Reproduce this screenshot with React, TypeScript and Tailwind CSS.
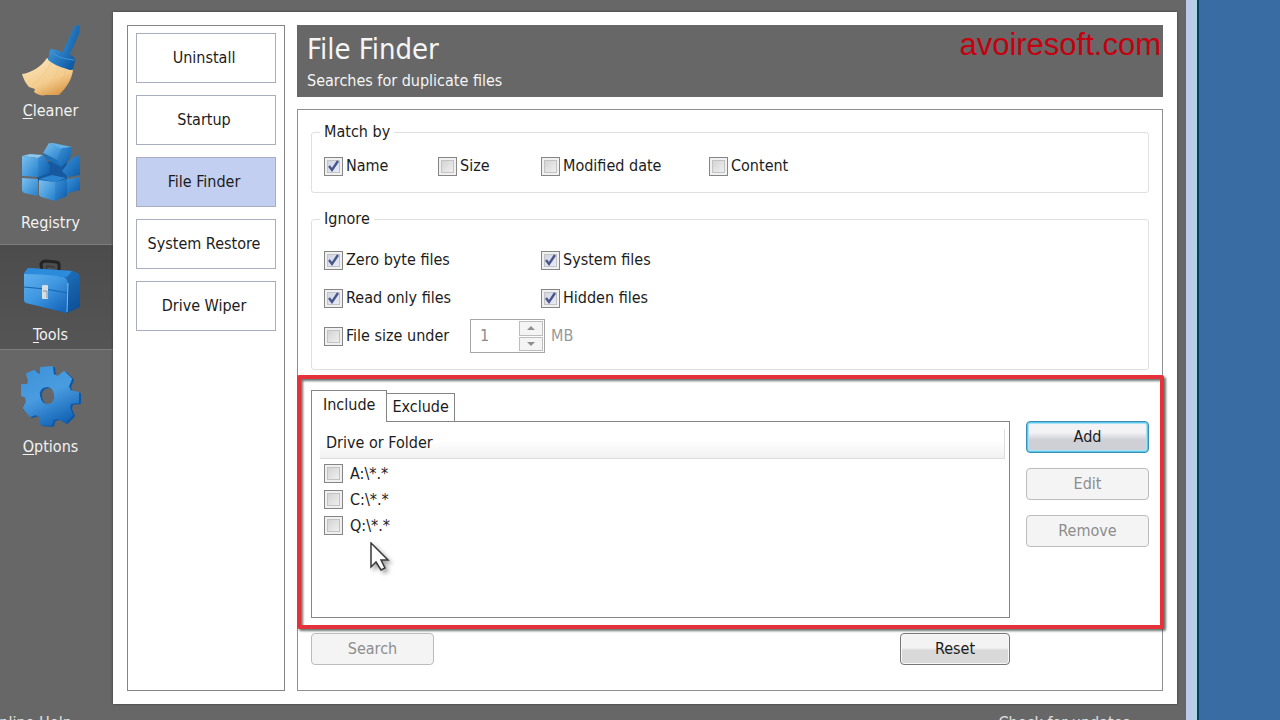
import { useState } from "react";
import clsx from "clsx";

// 좌측 메뉴 아이콘
function BroomIcon() {
  return (
    <svg viewBox="0 0 60 72" className="h-[72px] w-[60px]" aria-hidden="true">
      <defs>
        <linearGradient id="broom-handle" x1="0" y1="0" x2="1" y2="0.6">
          <stop offset="0" stopColor="#3f95d8" />
          <stop offset="1" stopColor="#0f5ca6" />
        </linearGradient>
        <linearGradient id="broom-hair" x1="0.2" y1="0" x2="0.8" y2="1">
          <stop offset="0" stopColor="#fbe6bb" />
          <stop offset="0.6" stopColor="#f3cb8d" />
          <stop offset="1" stopColor="#d9923f" />
        </linearGradient>
      </defs>
      <path
        d="M26 33 C20 42 10 48 1 49 C3 55 5 59 8 62 L14 64 L13 67 C17 70 21 71 25 70 L38 70 C46 62 51 54 52 45 C44 43 34 39 26 33Z"
        fill="url(#broom-hair)"
      />
      <path d="M30 37 C26 47 19 55 11 60 M38 41 C35 52 29 61 22 68 M45 44 C43 54 38 62 32 69" stroke="#e3b26c" strokeWidth="1" fill="none" opacity="0.3" />
      <path d="M53 2 Q58 -2 59 2 L58 9 L48 31 L41 28Z" fill="url(#broom-handle)" />
      <path d="M29 25 Q31 23 35 25 L50 30 Q54 32 54 36 L52 44 Q50 46 46 44 C38 42 32 39 27 35Z" fill="url(#broom-handle)" />
      <path d="M29 26 C37 33 45 34 53 35" stroke="#3f95d8" strokeWidth="1" fill="none" />
    </svg>
  );
}

function CubesIcon() {
  return (
    <svg viewBox="0 0 60 72" className="h-[72px] w-[60px]" aria-hidden="true">
      <defs>
        <linearGradient id="cube-light" x1="0" y1="0" x2="1" y2="1">
          <stop offset="0" stopColor="#7dc0ef" />
          <stop offset="1" stopColor="#2381cd" />
        </linearGradient>
        <linearGradient id="cube-dark" x1="0" y1="0" x2="1" y2="1">
          <stop offset="0" stopColor="#3b93d8" />
          <stop offset="1" stopColor="#0d5cab" />
        </linearGradient>
      </defs>
      <path d="M16 25 L46 24 L46 45 L16 45Z" fill="#17599f" />
      {/* 왼쪽 */}
      <path d="M1 19 L9 17 L22 18 L17 21Z" fill="#8bc8f0" />
      <path d="M1 19 L17 21 L17 40 L1 39Z" fill="url(#cube-light)" />
      <path d="M17 21 L22 18 L29 29 L28 36 L17 40Z" fill="url(#cube-dark)" />
      {/* 오른쪽 */}
      <path d="M51 21 L59 18 L59 38 L47 40 L41 34Z" fill="url(#cube-dark)" />
      <path d="M46 42 L59 40 L59 53 L47 56Z" fill="url(#cube-dark)" />
      {/* 아래 */}
      <path d="M1 41 L17 42 L17 59 L3 56 Q1 55 1 53Z" fill="url(#cube-light)" />
      <path d="M18 42 L31 38 L45 41 L34 45Z" fill="#2b84cf" />
      <path d="M18 43 L34 45 L34 64 L20 60 Q18 59 18 57Z" fill="url(#cube-light)" />
      <path d="M34 45 L46 42 L46 59 L34 64Z" fill="url(#cube-dark)" />
      {/* 위 */}
      <path d="M22 16 L28 6 L41 11 L36 23Z" fill="url(#cube-light)" />
      <path d="M28 6 L32 6 L51 10 L41 12Z" fill="#62b1e9" />
      <path d="M41 11 L51 10 L49 22 L40 30 L36 23Z" fill="url(#cube-dark)" />
      <path d="M22 16 L36 23 L40 30 L25 22Z" fill="#1d70ba" />
    </svg>
  );
}

function ToolboxIcon() {
  return (
    <svg viewBox="0 0 60 72" className="h-[72px] w-[60px]" aria-hidden="true">
      <defs>
        <linearGradient id="box-front" x1="0" y1="0" x2="0.8" y2="1">
          <stop offset="0" stopColor="#5fb0ec" />
          <stop offset="0.5" stopColor="#3f97e0" />
          <stop offset="1" stopColor="#1667bb" />
        </linearGradient>
        <linearGradient id="box-side" x1="0" y1="0" x2="1" y2="1">
          <stop offset="0" stopColor="#2f86d3" />
          <stop offset="1" stopColor="#0a4d94" />
        </linearGradient>
      </defs>
      <path d="M21 23 L20 15 Q21 12 25 12 L35 13 Q38 13 38 16 L38 22" stroke="#242424" strokeWidth="3" fill="none" />
      <path d="M25 22 L26 17 L34 18" stroke="#3a3a3a" strokeWidth="1.5" fill="none" />
      <path d="M3 24 L7 19 L51 22 Q57 23 59 27 L59 58 L46 64 L5 54 Q3 53 3 51Z" fill="url(#box-side)" />
      <path d="M4 23 L7 19 L51 22 L46 28 L4 25Z" fill="#2d8bdb" />
      <path d="M3 25 Q24 25 43 28 Q47 30 47 36 L46 64 L5 54 Q3 53 3 51Z" fill="url(#box-front)" />
      <path d="M3 38 L24 40 L47 44" stroke="#1763ad" strokeWidth="1" fill="none" />
      <path d="M47 34 L46 63" stroke="#74bdf1" strokeWidth="1" fill="none" />
      <rect x="21" y="36" width="6" height="14" rx="1" fill="#d6dee4" />
      <path d="M22 42 L26 42 L26 49" stroke="#83939f" strokeWidth="1" fill="none" />
    </svg>
  );
}

function GearIcon() {
  return (
    <svg viewBox="0 0 60 72" className="h-[72px] w-[60px]" aria-hidden="true">
      <defs>
        <linearGradient id="gear-face" gradientUnits="userSpaceOnUse" x1="15" y1="6" x2="42" y2="64">
          <stop offset="0" stopColor="#3f93d8" />
          <stop offset="0.45" stopColor="#4a9ce0" />
          <stop offset="1" stopColor="#1061b3" />
        </linearGradient>
        <path
          id="gear-shape"
          fillRule="evenodd"
          d="M20 7 L31 6 L32 14 L37 16 L43 11 L50 18 L47 25 L49 30 L57 32 L57 41 L49 42 L48 47 L51 54 L44 61 L37 57 L32 58 L30 64 L20 63 L19 55 L15 53 L9 55 L3 47 L6 41 L5 36 L1 34 L1 24 L7 24 L8 20 L6 13 L13 10 L18 14 L20 13Z M26 25 C20 25 17 30 18 35 C19 41 23 45 28 44 C33 43 35 38 34 33 C33 28 30 25 26 25Z"
        />
      </defs>
      <use href="#gear-shape" x="2" y="1" fill="#0f58a6" stroke="#0f58a6" strokeWidth="2" strokeLinejoin="round" />
      <use href="#gear-shape" fill="url(#gear-face)" stroke="url(#gear-face)" strokeWidth="2" strokeLinejoin="round" />
    </svg>
  );
}

const NAV_ITEMS = [
  { key: "C", before: "", after: "leaner", Icon: BroomIcon },
  { key: "g", before: "Re", after: "istry", Icon: CubesIcon },
  { key: "T", before: "", after: "ools", Icon: ToolboxIcon },
  { key: "O", before: "", after: "ptions", Icon: GearIcon },
];

const TOOLS = ["Uninstall", "Startup", "File Finder", "System Restore", "Drive Wiper"];

const FOLDERS = ["A:\\*.*", "C:\\*.*", "Q:\\*.*"];

// 체크박스
function CheckMark({ id, checked }: { id: string; checked?: boolean }) {
  return (
    <span className="grid h-[19px] w-[19px] shrink-0">
      <input
        id={id}
        type="checkbox"
        defaultChecked={checked}
        className="peer col-start-1 row-start-1 h-[19px] w-[19px] appearance-none border border-[#858585] bg-linear-to-br from-[#cdcdcf] to-[#f6f6f6] shadow-[inset_0_0_0_2px_#f0f0f0,inset_0_0_0_3px_#c3c3c5] checked:from-[#ccd1e0] checked:to-[#eef0fa]"
      />
      <svg viewBox="0 0 19 19" className="pointer-events-none col-start-1 row-start-1 hidden h-[19px] w-[19px] peer-checked:block">
        <path d="M5 9 L8 13 L14 4" fill="none" stroke="#49568c" strokeWidth="2.4" />
      </svg>
    </span>
  );
}

function CheckField({ id, text, checked, className }: { id: string; text: string; checked?: boolean; className?: string }) {
  return (
    <label htmlFor={id} className={clsx("flex items-center gap-[3px]", className)}>
      <CheckMark id={id} checked={checked} />
      {text}
    </label>
  );
}

const buttonBase = "h-8 rounded border text-center";
const buttonDisabled = "border-[#bcbcbc] bg-[#f4f4f4] text-[#8d8d8d]";

export default function App() {
  const [nav, setNav] = useState(2);
  const [tool, setTool] = useState("File Finder");
  const [tab, setTab] = useState("Include");

  return (
    <div className="flex h-screen overflow-hidden bg-[#386ca3] font-['DejaVu_Sans_Condensed','Noto_Sans',sans-serif] text-base leading-5 text-[#1c1c1c]">
      <div className="flex min-w-0 flex-1 flex-col bg-[#676767]">
        <div className="flex min-h-0 flex-1 pt-3 pr-[9px]">
          {/* 메인 메뉴 */}
          <nav className="flex w-[113px] shrink-0 flex-col gap-2 pt-[9px]">
            {NAV_ITEMS.map(({ key, before, after, Icon }, i) => (
              <button
                key={key}
                type="button"
                onClick={() => setNav(i)}
                className={clsx(
                  "flex h-[104px] flex-col items-center gap-1 pt-1 pr-3 text-[#f2f2f2]",
                  nav === i && "bg-linear-to-b from-[#4c4c4c] to-[#555555] shadow-[0_-1px_0_#7d7d7d,0_1px_0_#7d7d7d]"
                )}
              >
                <Icon />
                <span>
                  {before}
                  <span className="underline underline-offset-2">{key}</span>
                  {after}
                </span>
              </button>
            ))}
          </nav>

          <main className="flex min-w-0 flex-1 gap-3 bg-white px-[14px] py-[13px] shadow-[0_0_2px_#333]">
            {/* 도구 목록 */}
            <aside className="flex w-[158px] shrink-0 flex-col gap-3 border border-[#858585] px-2 py-[7px]">
              {TOOLS.map((name) => (
                <button
                  key={name}
                  type="button"
                  onClick={() => setTool(name)}
                  className={clsx(
                    "h-[50px] border border-[#a9adc0] pr-1",
                    tool === name ? "bg-[#c3cff0]" : "bg-white"
                  )}
                >
                  {name}
                </button>
              ))}
            </aside>

            <div className="flex min-w-0 flex-1 flex-col gap-3">
              <header className="flex h-[72px] shrink-0 justify-between bg-[#676767] pr-[2px] pl-[10px] text-[#f5f5f5]">
                <div className="pt-2">
                  <h1 className="text-[29px] leading-8">File Finder</h1>
                  <p className="pt-[6px]">Searches for duplicate files</p>
                </div>
                <p className="pt-1 font-['Liberation_Sans',Arial,sans-serif] text-[31px] leading-8 text-[#c4000f]">avoiresoft.com</p>
              </header>

              <section className="flex flex-1 flex-col border border-[#8f8f8f] px-[13px] pt-3">
                <fieldset className="rounded-[3px] border border-[#e0e0e0] px-2 pb-4">
                  <legend className="px-1">Match by</legend>
                  <div className="grid grid-cols-[114px_103px_168px_1fr] px-1 pt-[14px]">
                    <CheckField id="match-name" text="Name" checked />
                    <CheckField id="match-size" text="Size" />
                    <CheckField id="match-date" text="Modified date" />
                    <CheckField id="match-content" text="Content" />
                  </div>
                </fieldset>

                <fieldset className="mt-4 rounded-[3px] border border-[#e0e0e0] px-2 pb-[14px]">
                  <legend className="px-1">Ignore</legend>
                  <div className="grid auto-rows-[38px] grid-cols-[217px_1fr] items-center px-1 pt-3">
                    <CheckField id="ignore-zero" text="Zero byte files" checked />
                    <CheckField id="ignore-system" text="System files" checked />
                    <CheckField id="ignore-readonly" text="Read only files" checked />
                    <CheckField id="ignore-hidden" text="Hidden files" checked />
                    <div className="col-span-2 flex items-center text-[#999999]">
                      <CheckField id="ignore-size" text="File size under" className="w-[146px] text-[#1c1c1c]" />
                      <div className="flex h-[34px] w-[75px] border border-[#a6a6a6] bg-white p-px">
                        <input
                          aria-label="MB"
                          type="text"
                          defaultValue="1"
                          disabled
                          className="w-0 min-w-0 flex-1 pl-2 text-[#8d8d8d]"
                        />
                        <div className="flex w-[24px] flex-col gap-px">
                          <button type="button" disabled aria-label="+" className="flex flex-1 items-center justify-center border border-[#bdbdbd] bg-[#f4f4f4]">
                            <svg viewBox="0 0 8 4" className="h-1 w-2"><path d="M0 4 L4 0 L8 4Z" fill="#909090" /></svg>
                          </button>
                          <button type="button" disabled aria-label="-" className="flex flex-1 items-center justify-center border border-[#bdbdbd] bg-[#f4f4f4]">
                            <svg viewBox="0 0 8 4" className="h-1 w-2"><path d="M0 0 L4 4 L8 0Z" fill="#909090" /></svg>
                          </button>
                        </div>
                      </div>
                      <span className="pl-[6px]">MB</span>
                    </div>
                  </div>
                </fieldset>

                {/* 포함 / 제외 폴더 */}
                <div className="relative mt-5 flex gap-4">
                  <div className="flex min-w-0 flex-1 flex-col">
                    <div role="tablist" className="flex items-end">
                      {["Include", "Exclude"].map((name) => (
                        <button
                          key={name}
                          type="button"
                          role="tab"
                          aria-selected={tab === name}
                          onClick={() => setTab(name)}
                          className={clsx(
                            "border border-b-0 border-[#858585] bg-white",
                            tab === name ? "z-10 -mb-px h-8 px-[11px] pb-1" : "-ml-px h-7 px-[5px] pb-[2px]"
                          )}
                        >
                          {name}
                        </button>
                      ))}
                    </div>
                    <div className="h-[197px] border border-[#858585] bg-white pt-[7px] pr-1 pl-2">
                      <table className="w-full border-separate border-spacing-0">
                        <thead>
                          <tr>
                            <th className="h-[30px] border-r border-b border-[#dddddd] bg-linear-to-b from-white from-40% to-[#f1f1f2] pb-[2px] pl-[6px] text-left font-normal">
                              Drive or Folder
                            </th>
                          </tr>
                        </thead>
                        <tbody>
                          {FOLDERS.map((path, i) => (
                            <tr key={path}>
                              <td className="h-[26px] pt-[3px] pl-1">
                                <label htmlFor={`folder-${i}`} className="flex items-center gap-[7px]">
                                  <CheckMark id={`folder-${i}`} />
                                  {path}
                                </label>
                              </td>
                            </tr>
                          ))}
                        </tbody>
                      </table>
                    </div>
                  </div>

                  <div className="flex w-[123px] shrink-0 flex-col gap-[15px] pt-[31px]">
                    <button
                      type="button"
                      className={clsx(buttonBase, "border-[#3c8db5] bg-linear-to-b from-[#f3f3f5] from-35% to-[#cfd0d6] to-60% shadow-[inset_0_0_0_1px_#5cc8ee,inset_0_0_0_2px_#a8e0f4]")}
                    >
                      Add
                    </button>
                    <button type="button" disabled className={clsx(buttonBase, buttonDisabled)}>Edit</button>
                    <button type="button" disabled className={clsx(buttonBase, buttonDisabled)}>Remove</button>
                  </div>

                  {/* 강조 테두리 */}
                  <div className="pointer-events-none absolute -top-[15px] -right-[15px] -bottom-[11px] -left-[14px] z-20 rounded-xs border-4 border-[#e5323a] drop-shadow-[2px_2px_1px_rgba(40,60,50,0.7)]" />

                  {/* 마우스 커서 */}
                  <svg viewBox="0 0 24 32" className="pointer-events-none absolute top-[152px] left-[58px] z-20 h-8 w-6 drop-shadow-[3px_3px_2px_rgba(0,0,0,0.35)]" aria-hidden="true">
                    <path d="M2 1 L2 25 L7 20 L12 28 L16 26 L12 18 L19 18Z" fill="#ffffff" stroke="#3a3a3a" strokeWidth="1.5" />
                  </svg>
                </div>

                <div className="mt-[15px] flex justify-between pr-[139px] pb-6">
                  <button type="button" disabled className={clsx(buttonBase, buttonDisabled, "w-[123px]")}>Search</button>
                  <button
                    type="button"
                    className={clsx(buttonBase, "w-[110px] border-[#777777] bg-linear-to-b from-[#f3f3f3] from-45% to-[#d9d9d9] to-55% shadow-[inset_0_0_0_1px_#f8f8f8]")}
                  >
                    Reset
                  </button>
                </div>
              </section>
            </div>
          </main>
        </div>

        <footer className="flex h-4 shrink-0 justify-between overflow-hidden pt-[9px] pr-14 text-[#e0e0e0]">
          <a href="#help" className="-ml-3">Online Help</a>
          <a href="#update">Check for updates</a>
        </footer>
      </div>

      {/* 창 테두리와 바탕화면 */}
      <div className="w-[13px] shrink-0 border-r-2 border-[#0a3f5c] bg-linear-to-r from-[#bccbe9] from-50% to-[#a4dbe6]" />
      <div className="w-[81px] shrink-0 bg-[#386ca3]" />
    </div>
  );
}
